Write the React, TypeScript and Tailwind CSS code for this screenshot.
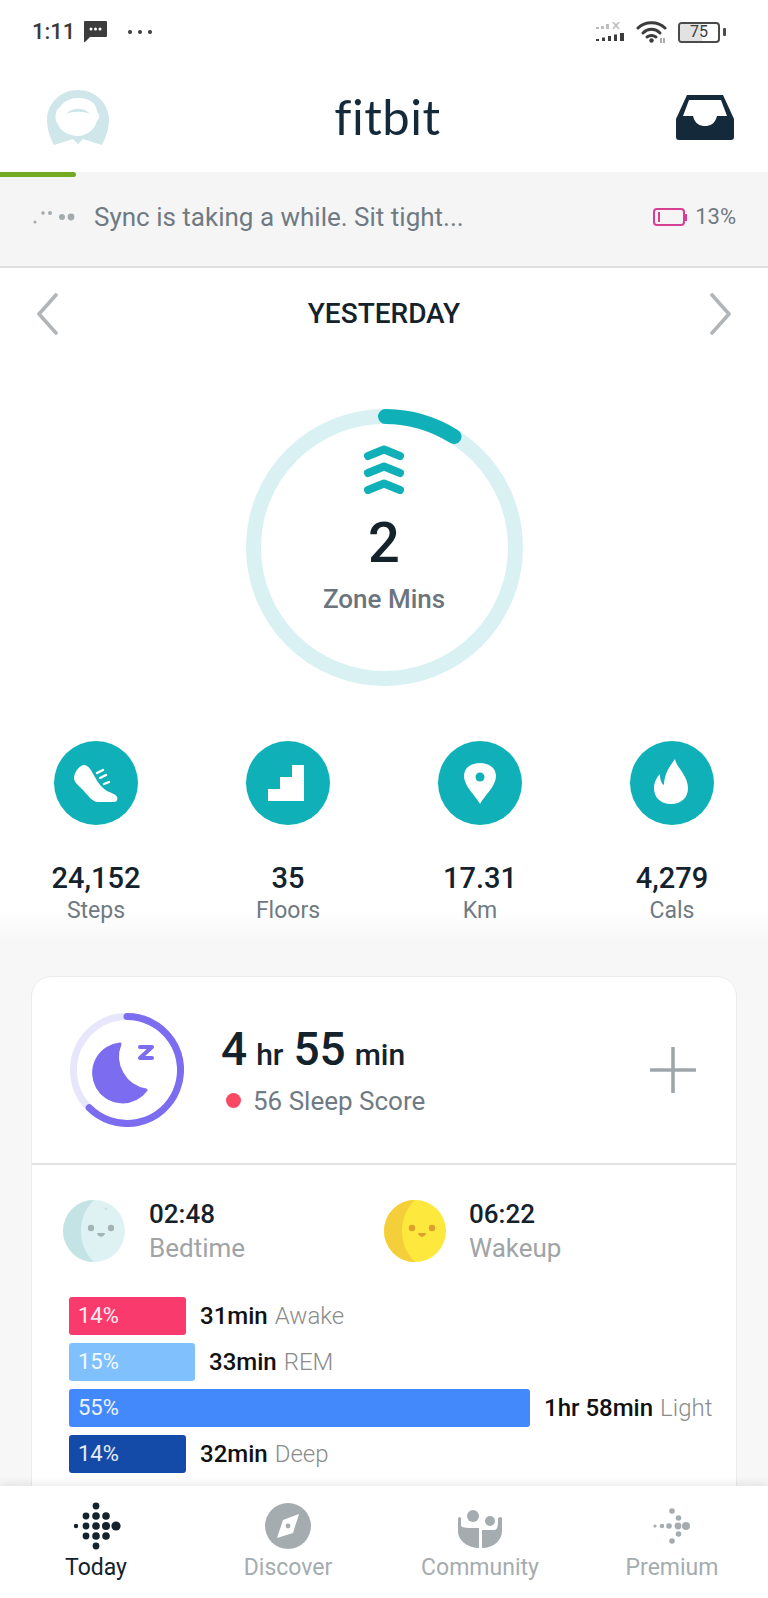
import React from 'react';

const TEAL = '#0fb0b7';

const ShoeIcon = () => (
  <svg viewBox="0 0 84 84" className="w-[84px] h-[84px]">
    <path
      d="M30 24 C26 24 20 31 20 37 C20 41 24 44 28 48 C33 53 38 61 44 61 L60 61 C63 61 64 58 63 56 C62 53 57 52 53 50 C46 46 42 38 38 31 C36 27 33 24 30 24 Z"
      fill="#fff"
    />
    <path d="M41 33 L46 30 M44 38 L50 35 M48 43 L54 41" stroke={TEAL} strokeWidth="1.5" />
    <path d="M43 32 L49 29 M46 37 L52 34 M50 43 L55 41" stroke="#fff" strokeWidth="2.4" strokeLinecap="round" />
  </svg>
);

const StairsIcon = () => (
  <svg viewBox="0 0 84 84" className="w-[84px] h-[84px]">
    <path d="M46 24 H58 V60 H22 V48 H34 V36 H46 Z" fill="#fff" />
  </svg>
);

const PinIcon = () => (
  <svg viewBox="0 0 84 84" className="w-[84px] h-[84px]">
    <path d="M42 63 C37 54 26 45 26 35 C26 27 33 22 42 22 C51 22 58 27 58 35 C58 45 47 54 42 63 Z" fill="#fff" />
    <circle cx="42" cy="36" r="4.5" fill={TEAL} />
  </svg>
);

const FlameIcon = () => (
  <svg viewBox="0 0 84 84" className="w-[84px] h-[84px]">
    <path
      d="M45 18 C46 26 58 34 58 47 C58 57 51 63 41 63 C31 63 24 57 24 47 C24 41 27 36 30 33 C30 38 31 42 34 44 C34 34 39 26 45 18 Z"
      fill="#fff"
    />
  </svg>
);

const stats = [
  { value: '24,152', label: 'Steps', icon: <ShoeIcon /> },
  { value: '35', label: 'Floors', icon: <StairsIcon /> },
  { value: '17.31', label: 'Km', icon: <PinIcon /> },
  { value: '4,279', label: 'Cals', icon: <FlameIcon /> },
];

const stages = [
  { pct: '14%', width: 117, color: '#f83a6d', time: '31min', name: 'Awake' },
  { pct: '15%', width: 126, color: '#7fc0fd', time: '33min', name: 'REM' },
  { pct: '55%', width: 461, color: '#4489fb', time: '1hr 58min', name: 'Light' },
  { pct: '14%', width: 117, color: '#144ba8', time: '32min', name: 'Deep' },
];

const StatusBar = () => (
  <div className="h-[60px] shrink-0 flex items-center justify-between pl-[32px] pr-[42px] pt-[4px] bg-white">
    <div className="flex items-center">
      <span className="text-[22px] font-medium text-[#3a3a3a] leading-none">1:11</span>
      <svg viewBox="0 0 23 22" className="w-[23px] h-[22px] ml-[9px]">
        <path d="M1 0 H22 a1 1 0 0 1 1 1 V15 a1 1 0 0 1 -1 1 H6 L1 21 a0.6 0.6 0 0 1 -1 -0.5 V1 a1 1 0 0 1 1 -1 Z" fill="#3c3c3c" />
        <circle cx="7" cy="8" r="1.5" fill="#fff" />
        <circle cx="11.5" cy="8" r="1.5" fill="#fff" />
        <circle cx="16" cy="8" r="1.5" fill="#fff" />
      </svg>
      <div className="flex gap-[6px] ml-[21px]">
        <span className="w-[4px] h-[4px] rounded-full bg-[#3c3c3c]" />
        <span className="w-[4px] h-[4px] rounded-full bg-[#3c3c3c]" />
        <span className="w-[4px] h-[4px] rounded-full bg-[#3c3c3c]" />
      </div>
    </div>
    <div className="flex items-center">
      <svg viewBox="0 0 30 20" className="w-[30px] h-[20px]">
        <g fill="#bdbdbd">
          <rect x="0" y="5" width="3" height="2" />
          <rect x="5" y="4" width="3" height="3" />
          <rect x="10" y="2" width="3" height="5" />
          <path d="M17 0 L23 7 M23 0 L17 7" stroke="#bdbdbd" strokeWidth="1.6" />
        </g>
        <g fill="#3c3c3c">
          <rect x="0" y="17" width="3" height="2" />
          <rect x="6" y="15.5" width="3" height="3.5" />
          <rect x="12" y="14" width="3" height="5" />
          <rect x="18" y="12.5" width="3" height="6.5" />
          <rect x="24" y="11" width="4" height="8" />
        </g>
      </svg>
      <svg viewBox="0 0 32 24" className="w-[32px] h-[24px] ml-[10px]">
        <g fill="none" stroke="#3c3c3c" strokeWidth="3" strokeLinecap="round">
          <path d="M2 8 C9 1 22 1 29 8" />
          <path d="M7 13 C12 8 19 8 24 13" />
          <path d="M11 17 C14 15 17 15 20 17" />
        </g>
        <circle cx="15.5" cy="20.5" r="2.2" fill="#3c3c3c" />
        <path d="M25 18 V23 M28 18 V23" stroke="#8a8a8a" strokeWidth="1.4" />
      </svg>
      <div className="ml-[10px] relative w-[42px] h-[21px] rounded-[4px] border-[2.5px] border-[#4a4a4a] flex items-center justify-center overflow-hidden">
        <span className="absolute left-0 top-0 bottom-0 w-[22px] bg-[#e2e2e2]" />
        <span className="relative text-[16px] leading-none text-[#3c3c3c]">75</span>
      </div>
      <span className="ml-[3px] w-[3px] h-[8px] rounded-[1px] bg-[#4a4a4a]" />
    </div>
  </div>
);

const Header = () => (
  <div className="h-[112px] shrink-0 flex items-center justify-between pl-[47px] pr-[34px] bg-white">
    <svg viewBox="0 0 62 55" className="w-[62px] h-[55px] mt-[2px]">
      <path d="M31 0 C48 0 62 13 62 30 C62 39 59 47 55 55 L36 49 L31 54 L26 49 L7 55 C3 47 0 39 0 30 C0 13 14 0 31 0 Z" fill="#cfe7ea" />
      <path d="M31 8 C43 8 50 14 50 22 C53 24 53 29 50 31 C48 39 40 46 31 46 C22 46 13 41 11 34 C7 30 8 20 13 17 C17 11 24 8 31 8 Z" fill="#fff" />
      <path d="M19 24 C25 17 37 17 43 24 C37 21 25 21 19 24 Z" fill="#cfe7ea" />
    </svg>
    <span className="font-['Lato',sans-serif] text-[49px] leading-none text-[#14293a] tracking-[0.5px] mr-[10px]">fitbit</span>
    <svg viewBox="0 0 58 45" className="w-[58px] h-[45px] mt-[2px]">
      <path d="M11 0 H47 L58 24 V42 a3 3 0 0 1 -3 3 H3 a3 3 0 0 1 -3 -3 V24 Z" fill="#14293a" />
      <path d="M13 5 H45 L51 21 H41 C39 29 34 31 29 31 C24 31 19 29 17 21 H7 Z" fill="#fff" />
    </svg>
  </div>
);

const SyncBar = () => (
  <div className="relative h-[96px] shrink-0 flex items-center justify-between pl-[33px] pr-[32px] pb-[4px] bg-[#f5f5f5] border-b-2 border-[#dfdfdf]">
    <span className="absolute left-0 top-0 w-[76px] h-[5px] rounded-r-full bg-[#74aa22]" />
    <div className="flex items-center">
      <svg viewBox="0 0 44 22" className="w-[44px] h-[22px]">
        <g fill="#a4abaf">
          <circle cx="2" cy="16" r="1.5" />
          <circle cx="10" cy="7" r="1.8" />
          <circle cx="17" cy="7" r="2" />
          <circle cx="29" cy="11" r="3" />
          <circle cx="38" cy="11" r="3.4" />
        </g>
      </svg>
      <span className="ml-[17px] text-[26px] leading-none text-[#6f7a83]">Sync is taking a while. Sit tight...</span>
    </div>
    <div className="flex items-center">
      <div className="flex items-center">
        <div className="w-[32px] h-[18px] rounded-[4px] border-2 border-[#d63f93] flex items-center pl-[3px]">
          <span className="w-[2px] h-[10px] bg-[#d63f93]" />
        </div>
        <span className="w-[2px] h-[7px] bg-[#d63f93]" />
      </div>
      <span className="ml-[8px] text-[22px] leading-none text-[#6f7a83]">13%</span>
    </div>
  </div>
);

const DateRow = () => (
  <div className="h-[92px] shrink-0 flex items-center justify-between px-[36px] bg-white">
    <svg viewBox="0 0 22 42" className="w-[22px] h-[42px]">
      <path d="M20 2 L3 21 L20 40" fill="none" stroke="#b1b5b7" strokeWidth="3.6" strokeLinecap="round" strokeLinejoin="round" />
    </svg>
    <span className="text-[28px] font-medium leading-none text-[#14222c]">YESTERDAY</span>
    <svg viewBox="0 0 22 42" className="w-[22px] h-[42px]">
      <path d="M2 2 L19 21 L2 40" fill="none" stroke="#b1b5b7" strokeWidth="3.6" strokeLinecap="round" strokeLinejoin="round" />
    </svg>
  </div>
);

const ZoneRing = () => (
  <div className="relative mx-auto mt-[49px] w-[277px] h-[277px] flex flex-col items-center">
    <svg viewBox="0 0 277 277" className="absolute inset-0 w-[277px] h-[277px]">
      <circle cx="138.5" cy="138.5" r="131" fill="none" stroke="#daf1f3" strokeWidth="15" />
      <path d="M139.5 7.5 A131 131 0 0 1 208 27.5" fill="none" stroke={TEAL} strokeWidth="15" strokeLinecap="round" />
    </svg>
    <svg viewBox="0 0 40 50" className="relative w-[40px] h-[50px] mt-[36px]">
      <g fill="none" stroke={TEAL} strokeWidth="8" strokeLinecap="round" strokeLinejoin="round">
        <path d="M4 11 L20 4.5 L36 11" />
        <path d="M4 28 L20 21.5 L36 28" />
        <path d="M4 45 L20 38.5 L36 45" />
      </g>
    </svg>
    <span className="relative mt-[20px] text-[56px] font-medium leading-[56px] text-[#14222c]">2</span>
    <span className="relative mt-[12px] text-[26px] font-medium leading-[32px] text-[#6c757d]">Zone Mins</span>
  </div>
);

const Stats = () => (
  <div className="grid grid-cols-4 mt-[55px] pb-[14px] bg-linear-to-b from-white from-85% to-[#f7f7f7]">
    {stats.map((s) => (
      <div key={s.label} className="flex flex-col items-center">
        <div className="w-[84px] h-[84px] rounded-full bg-[#0fb0b7]">{s.icon}</div>
        <span className="mt-[35px] text-[29px] font-medium leading-[36px] text-[#14222c]">{s.value}</span>
        <span className="text-[23px] leading-[30px] text-[#6f7a83]">{s.label}</span>
      </div>
    ))}
  </div>
);

const SleepSummary = () => (
  <div className="h-[188px] flex items-center pl-[38px] pr-[40px] border-b-2 border-[#e2e2e2]">
    <svg viewBox="0 0 114 114" className="w-[114px] h-[114px] shrink-0">
      <circle cx="57" cy="57" r="53.5" fill="none" stroke="#e8e6fb" strokeWidth="7" />
      <path d="M57 3.5 A53.5 53.5 0 1 1 19.2 94.8" fill="none" stroke="#7b6cf0" strokeWidth="7" strokeLinecap="round" />
      <path d="M50 31 A29 29 0 1 0 76 77 A34 34 0 0 1 50 31 Z" fill="#7b6cf0" stroke="#7b6cf0" strokeWidth="3" strokeLinejoin="round" />
      <path d="M70 34 H82 L70 45 H82" fill="none" stroke="#7b6cf0" strokeWidth="4" strokeLinejoin="round" strokeLinecap="round" />
    </svg>
    <div className="ml-[37px] flex-1">
      <div className="flex items-baseline font-medium text-[#14222c]">
        <span className="text-[46px] leading-[52px]">4</span>
        <span className="ml-[9px] text-[30px] leading-[52px]">hr</span>
        <span className="ml-[10px] text-[46px] leading-[52px]">55</span>
        <span className="ml-[9px] text-[30px] leading-[52px]">min</span>
      </div>
      <div className="flex items-center mt-[3px]">
        <span className="ml-[5px] w-[15px] h-[15px] rounded-full bg-[#f84a64]" />
        <span className="ml-[12px] text-[26px] leading-[34px] text-[#6f7a83]">56 Sleep Score</span>
      </div>
    </div>
    <svg viewBox="0 0 46 46" className="w-[46px] h-[46px] shrink-0">
      <path d="M23 1 V45 M1 23 H45" stroke="#9ea6aa" strokeWidth="3.6" strokeLinecap="round" />
    </svg>
  </div>
);

const MoonFace = () => (
  <svg viewBox="0 0 62 62" className="w-[62px] h-[62px] shrink-0">
    <circle cx="31" cy="31" r="31" fill="#dff2f3" />
    <path d="M31 0 A31 31 0 0 0 31 62 C21 52 18 41 18 31 C18 21 21 10 31 0 Z" fill="#c3e3e5" />
    <circle cx="28" cy="28" r="3.2" fill="#a4b4b6" />
    <circle cx="53" cy="28" r="0" fill="#a4b4b6" />
    <circle cx="48" cy="28" r="3.2" fill="#a4b4b6" />
    <path d="M34 33 H42 C41 38 35 38 34 33 Z" fill="#a4b4b6" />
    <circle cx="43" cy="9" r="1.4" fill="#c3e3e5" />
  </svg>
);

const SunFace = () => (
  <svg viewBox="0 0 62 62" className="w-[62px] h-[62px] shrink-0">
    <circle cx="31" cy="31" r="31" fill="#fde83d" />
    <path d="M31 0 A31 31 0 0 0 31 62 C21 52 18 41 18 31 C18 21 21 10 31 0 Z" fill="#f5cf3a" />
    <circle cx="28" cy="28" r="3.2" fill="#dd9f2e" />
    <circle cx="48" cy="28" r="3.2" fill="#dd9f2e" />
    <path d="M34 33 H42 C41 38 35 38 34 33 Z" fill="#dd9f2e" />
  </svg>
);

const SleepTimes = () => (
  <div className="flex pt-[32px] pl-[31px]">
    <div className="w-[321px] flex items-center">
      <MoonFace />
      <div className="ml-[24px]">
        <div className="text-[26px] font-medium leading-[34px] text-[#14222c]">02:48</div>
        <div className="text-[26px] leading-[34px] text-[#a0a4a6]">Bedtime</div>
      </div>
    </div>
    <div className="flex items-center">
      <SunFace />
      <div className="ml-[23px]">
        <div className="text-[26px] font-medium leading-[34px] text-[#14222c]">06:22</div>
        <div className="text-[26px] leading-[34px] text-[#a0a4a6]">Wakeup</div>
      </div>
    </div>
  </div>
);

const StageBars = () => (
  <div className="flex flex-col gap-2 mt-[32px] pl-[37px]">
    {stages.map((s) => (
      <div key={s.name} className="flex items-center h-[38px]">
        <div
          className="h-[38px] rounded-[3px] flex items-center pl-[9px] text-[22px] leading-none text-white/90"
          style={{ width: s.width, backgroundColor: s.color }}
        >
          {s.pct}
        </div>
        <span className="ml-[14px] text-[24px] font-medium leading-none text-[#111]">{s.time}</span>
        <span className="ml-[7px] text-[24px] font-light leading-none text-[#8b8b8b]">{s.name}</span>
      </div>
    ))}
  </div>
);

const TodayLogo = () => {
  const rows: [number, number, number][] = [
    [0, -20, 3.4],
    [-10, -10, 3.4], [0, -10, 3.8], [10, -10, 3.8],
    [-20, 0, 2.2], [-10, 0, 3.4], [0, 0, 3.8], [10, 0, 4], [20, 0, 4.6],
    [-10, 10, 3.4], [0, 10, 3.8], [10, 10, 3.8],
    [0, 20, 3.4],
  ];
  return (
    <svg viewBox="-25 -24 50 48" className="w-[50px] h-[48px]">
      {rows.map(([x, y, r]) => (
        <circle key={`${x}-${y}`} cx={x} cy={y} r={r} fill="#14222c" />
      ))}
    </svg>
  );
};

const PremiumLogo = () => {
  const dots: [number, number, number][] = [
    [0, -15, 2.8],
    [6.5, -8, 2.8],
    [-17, 0, 1.6], [-10, 0, 2.2], [-3, 0, 2.8], [6, 0, 3.4], [14, 0, 4],
    [6.5, 8, 2.8],
    [0, 15, 2.8],
  ];
  return (
    <svg viewBox="-25 -24 50 48" className="w-[50px] h-[48px]">
      {dots.map(([x, y, r]) => (
        <circle key={`${x}-${y}`} cx={x} cy={y} r={r} fill="#a5acb0" />
      ))}
    </svg>
  );
};

const CompassIcon = () => (
  <svg viewBox="-25 -24 50 48" className="w-[50px] h-[48px]">
    <circle cx="0" cy="0" r="23" fill="#a5acb0" />
    <path d="M11 -12 L5 7 L-11 12 L-5 -6 Z" fill="#fff" />
    <circle cx="0" cy="0" r="2.4" fill="#a5acb0" />
  </svg>
);

const CommunityIcon = () => (
  <svg viewBox="-25 -24 50 48" className="w-[50px] h-[48px]">
    <g fill="#a5acb0">
      <circle cx="-7" cy="-10" r="6" />
      <circle cx="10" cy="-5" r="5" />
      <path d="M-22 -8 C-20 -10 -19 -9 -19 -7 V0 C-17 2 -12 2 -1 2 V22 C-10 22 -22 16 -22 5 Z" />
      <path d="M2 4 H14 C17 4 18 2 18 -7 C18 -9 21 -10 22 -8 V5 C22 14 14 22 2 22 Z" />
    </g>
  </svg>
);

const tabs = [
  { label: 'Today', active: true, icon: <TodayLogo /> },
  { label: 'Discover', active: false, icon: <CompassIcon /> },
  { label: 'Community', active: false, icon: <CommunityIcon /> },
  { label: 'Premium', active: false, icon: <PremiumLogo /> },
];

const BottomNav = () => (
  <div className="relative h-[112px] shrink-0 grid grid-cols-4 bg-white pt-[16px] shadow-[0_-3px_8px_rgba(0,0,0,0.08)]">
    {tabs.map((t) => (
      <div key={t.label} className="flex flex-col items-center">
        {t.icon}
        <span className={`mt-[3px] text-[23px] leading-[30px] ${t.active ? 'text-[#14222c]' : 'text-[#a5acb0]'}`}>
          {t.label}
        </span>
      </div>
    ))}
  </div>
);

export default function App() {
  return (
    <div className="w-[768px] h-[1598px] flex flex-col overflow-hidden bg-white font-['Roboto',sans-serif]">
      <StatusBar />
      <Header />
      <SyncBar />
      <DateRow />
      <ZoneRing />
      <Stats />
      <div className="flex-1 min-h-0 overflow-hidden bg-[#f7f7f7] px-[31px] pt-[36px]">
        <div className="bg-white rounded-t-[20px] border border-[#ececec] h-[600px]">
          <SleepSummary />
          <SleepTimes />
          <StageBars />
        </div>
      </div>
      <BottomNav />
    </div>
  );
}
